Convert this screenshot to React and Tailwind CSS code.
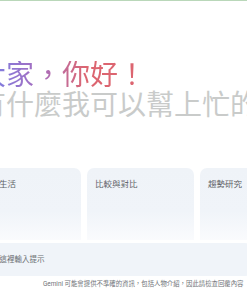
export default function App() {
  const font = { fontFamily: "Roboto, 'Noto Sans CJK TC', 'Noto Sans', sans-serif" };
  return (
    <div className="w-[247px] h-[296px] overflow-hidden bg-white flex flex-col" style={font}>
      <div className="h-px w-full bg-[#b9d7b9] shrink-0" />
      <div className="mt-[60px] -ml-[22px] whitespace-nowrap text-[28px] leading-[30px] font-normal">
        <div className="inline-block bg-gradient-to-r from-[#6b80ec] via-[#a86cbc] via-38% to-[#dc6570] to-64% bg-clip-text text-transparent">
          大家，你好！
        </div>
        <div className="text-[#c9cbca]">有什麼我可以幫上忙的嗎？</div>
      </div>
      <div className="mt-[47px] -ml-[26px] flex gap-[6px] whitespace-nowrap">
        <div className="w-[107px] h-[72px] shrink-0 rounded-t-[7px] bg-gradient-to-b from-[#eff3f8] via-[#f0f4f9] via-60% to-[#fafbfd] pt-[10px] px-[8px] text-[8.5px] leading-[12px] text-[#5f6368]">
          日常生活
        </div>
        <div className="w-[107px] h-[72px] shrink-0 rounded-t-[7px] bg-gradient-to-b from-[#eff3f8] via-[#f0f4f9] via-60% to-[#fafbfd] pt-[10px] px-[8px] text-[8.5px] leading-[12px] text-[#5f6368]">
          比較與對比
        </div>
        <div className="w-[107px] h-[72px] shrink-0 rounded-t-[7px] bg-gradient-to-b from-[#eff3f8] via-[#f0f4f9] via-60% to-[#fafbfd] pt-[10px] px-[8px] text-[8.5px] leading-[12px] text-[#5f6368]">
          趨勢研究
        </div>
      </div>
      <div className="mt-[3px] -ml-[40px] w-[300px] h-[33px] shrink-0 rounded-[16px] bg-[#f0f4f9] flex items-center pl-[32px] whitespace-nowrap text-[7.5px] text-[#6b6f73]">
        在這裡輸入提示
      </div>
      <div className="mt-[3px] ml-[43px] whitespace-nowrap text-[6.4px] leading-[10px] text-[#6f7378]">
        Gemini 可能會提供不準確的資訊，包括人物介紹，因此請檢查回覆內容
      </div>
    </div>
  );
}
